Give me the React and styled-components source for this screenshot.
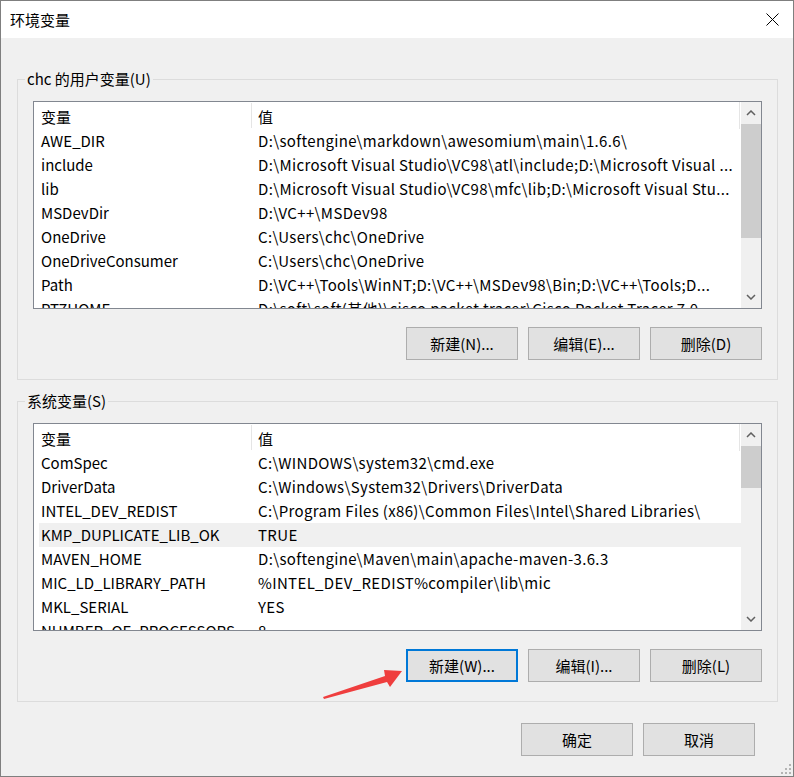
import React from "react";
import styled, { createGlobalStyle } from "styled-components";

const Global = createGlobalStyle`
  html, body { margin: 0; padding: 0; background: #f0f0f0; }
  * { box-sizing: border-box; }
  body { font-family: "Noto Sans CJK SC", "Noto Sans", sans-serif; font-size: 15px; color: #000; }
`;

const Window = styled.div`
  position: relative;
  width: 794px;
  height: 777px;
  border: 1px solid #7f7f7f;
  background: #f0f0f0;
  display: flex;
  flex-direction: column;
  overflow: hidden;
`;

const TitleBar = styled.div`
  height: 37px;
  flex: none;
  background: #fff;
  display: flex;
  align-items: center;
  justify-content: space-between;
  padding: 0 14px 0 9px;
`;

const Title = styled.span`
  font-size: 15px;
  line-height: 20px;
`;

const Body = styled.div`
  flex: 1;
  display: flex;
  flex-direction: column;
  padding: 0 15px 0 16px;
`;

const Group = styled.fieldset`
  margin: ${(p) => p.$top}px 0 0 0;
  border: 1px solid #dcdcdc;
  padding: 12px 15px 19px;
  min-width: 0;
`;

const Legend = styled.legend`
  margin-left: -8px;
  padding: 0 2px;
  font-size: 15px;
  line-height: 20px;
`;

const List = styled.div`
  height: 208px;
  border: 1px solid #828790;
  background: #fff;
  display: flex;
  overflow: hidden;
`;

const ListContent = styled.div`
  flex: 1;
  min-width: 0;
  overflow: hidden;
`;

const Header = styled.div`
  height: 27px;
  display: grid;
  grid-template-columns: 218px 1fr;
  border-right: 1px solid #e5e5e5;
  margin-right: 1px;
`;

const HeadCell = styled.div`
  display: flex;
  align-items: center;
  padding-left: ${(p) => p.$pad}px;
  padding-top: 2px;
  border-right: ${(p) => (p.$sep ? "1px solid #e5e5e5" : "none")};
  margin: 1px 0 1px;
`;

const Row = styled.div`
  height: 24px;
  margin-left: 5px;
  display: grid;
  grid-template-columns: 217px 1fr;
  background: ${(p) => (p.$selected ? "#f0f0f0" : "transparent")};
`;

const Cell = styled.div`
  padding-left: 2px;
  line-height: 24px;
  white-space: nowrap;
  overflow: hidden;
  letter-spacing: ${(p) => (p.$value ? "0.35px" : "0")};
`;

const ScrollBar = styled.div`
  width: 20px;
  flex: none;
  background: #f0f0f0;
  display: flex;
  flex-direction: column;
`;

const ScrollButton = styled.div`
  height: 22px;
  flex: none;
  display: flex;
  align-items: center;
  justify-content: center;
`;

const Track = styled.div`
  flex: 1;
  display: flex;
  flex-direction: column;
`;

const Thumb = styled.div`
  height: ${(p) => p.$h}px;
  margin-top: ${(p) => p.$top}px;
  background: #cdcdcd;
`;

const ButtonRow = styled.div`
  display: flex;
  justify-content: flex-end;
  gap: 10px;
  margin-top: ${(p) => p.$top}px;
  padding-right: ${(p) => p.$right || 0}px;
`;

const Button = styled.button`
  width: 112px;
  height: 33px;
  background: #e1e1e1;
  border: ${(p) => (p.$focus ? "2px solid #0078d7" : "1px solid #adadad")};
  font-family: "Noto Sans CJK SC", "Noto Sans", sans-serif;
  font-size: 15px;
  color: #000;
  padding: 0;
  display: flex;
  align-items: center;
  justify-content: center;
`;

const Overlay = styled.svg`
  position: absolute;
  left: 0;
  top: 0;
  pointer-events: none;
`;

const Grip = styled.svg`
  position: absolute;
  right: 1px;
  bottom: 1px;
`;

const Chevron = ({ up }) => (
  <svg width="10" height="6" viewBox="0 0 10 6">
    <path
      d={up ? "M1 5 L5 1 L9 5" : "M1 1 L5 5 L9 1"}
      fill="none"
      stroke="#606060"
      strokeWidth="1.5"
    />
  </svg>
);

const userVars = [
  ["AWE_DIR", "D:\\softengine\\markdown\\awesomium\\main\\1.6.6\\"],
  ["include", "D:\\Microsoft Visual Studio\\VC98\\atl\\include;D:\\Microsoft Visual ..."],
  ["lib", "D:\\Microsoft Visual Studio\\VC98\\mfc\\lib;D:\\Microsoft Visual Stu..."],
  ["MSDevDir", "D:\\VC++\\MSDev98"],
  ["OneDrive", "C:\\Users\\chc\\OneDrive"],
  ["OneDriveConsumer", "C:\\Users\\chc\\OneDrive"],
  ["Path", "D:\\VC++\\Tools\\WinNT;D:\\VC++\\MSDev98\\Bin;D:\\VC++\\Tools;D..."],
  ["PTZHOME", "D:\\soft\\soft(其他)\\cisco packet tracer\\Cisco Packet Tracer 7.0"],
];

const sysVars = [
  ["ComSpec", "C:\\WINDOWS\\system32\\cmd.exe"],
  ["DriverData", "C:\\Windows\\System32\\Drivers\\DriverData"],
  ["INTEL_DEV_REDIST", "C:\\Program Files (x86)\\Common Files\\Intel\\Shared Libraries\\"],
  ["KMP_DUPLICATE_LIB_OK", "TRUE"],
  ["MAVEN_HOME", "D:\\softengine\\Maven\\main\\apache-maven-3.6.3"],
  ["MIC_LD_LIBRARY_PATH", "%INTEL_DEV_REDIST%compiler\\lib\\mic"],
  ["MKL_SERIAL", "YES"],
  ["NUMBER_OF_PROCESSORS", "8"],
];

const VarList = ({ rows, selected, thumbTop, thumbH }) => (
  <List>
    <ListContent>
      <Header>
        <HeadCell $pad={7} $sep>变量</HeadCell>
        <HeadCell $pad={6}>值</HeadCell>
      </Header>
      {rows.map(([k, v], i) => (
        <Row key={k} $selected={i === selected}>
          <Cell>{k}</Cell>
          <Cell $value>{v}</Cell>
        </Row>
      ))}
    </ListContent>
    <ScrollBar>
      <ScrollButton>
        <Chevron up />
      </ScrollButton>
      <Track>
        <Thumb $top={thumbTop} $h={thumbH} />
      </Track>
      <ScrollButton>
        <Chevron />
      </ScrollButton>
    </ScrollBar>
  </List>
);

export default function App() {
  return (
    <>
      <Global />
      <Window>
        <TitleBar>
          <Title>环境变量</Title>
          <svg width="13" height="13" viewBox="0 0 13 13">
            <path d="M0.5 0.5 L12.5 12.5 M12.5 0.5 L0.5 12.5" stroke="#000" strokeWidth="1" />
          </svg>
        </TitleBar>
        <Body>
          <Group $top={31}>
            <Legend>chc 的用户变量(U)</Legend>
            <VarList rows={userVars} thumbTop={0} thumbH={114} />
            <ButtonRow $top={18}>
              <Button>新建(N)...</Button>
              <Button>编辑(E)...</Button>
              <Button>删除(D)</Button>
            </ButtonRow>
          </Group>
          <Group $top={11}>
            <Legend>系统变量(S)</Legend>
            <VarList rows={sysVars} selected={3} thumbTop={0} thumbH={42} />
            <ButtonRow $top={18}>
              <Button $focus>新建(W)...</Button>
              <Button>编辑(I)...</Button>
              <Button>删除(L)</Button>
            </ButtonRow>
          </Group>
          <ButtonRow $top={21} $right={23}>
            <Button>确定</Button>
            <Button>取消</Button>
          </ButtonRow>
        </Body>
        <Overlay width="794" height="777" viewBox="0 0 794 777">
          <polygon
            points="322,696 384,675 383,669 401,670 389,686 386,681 323,698"
            fill="#ef3e3e"
          />
        </Overlay>
        <Grip width="12" height="12" viewBox="0 0 12 12">
          {[
            [10, 2],
            [10, 6],
            [6, 6],
            [10, 10],
            [6, 10],
            [2, 10],
          ].map(([x, y]) => (
            <rect key={`${x}-${y}`} x={x - 1} y={y - 1} width="2" height="2" fill="#b4b4b4" />
          ))}
        </Grip>
      </Window>
    </>
  );
}
